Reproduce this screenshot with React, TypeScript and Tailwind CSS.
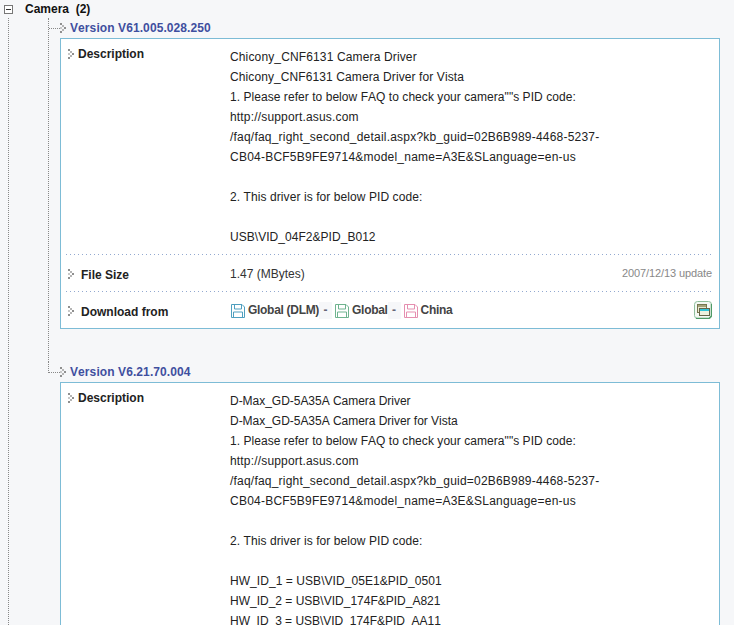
type Line = { text: string; fit?: string };

const commonLines: Line[] = [
  { text: "1. Please refer to below FAQ to check your camera\"\"s PID code:", fit: "tracking-[0.05px]" },
  { text: "http://support.asus.com", fit: "tracking-[0.17px]" },
  { text: "/faq/faq_right_second_detail.aspx?kb_guid=02B6B989-4468-5237-", fit: "tracking-[0.21px]" },
  { text: "CB04-BCF5B9FE9714&model_name=A3E&SLanguage=en-us", fit: "tracking-[0.23px]" },
  { text: "" },
  { text: "2. This driver is for below PID code:", fit: "tracking-[0.08px]" },
  { text: "" },
];

const chicony: Line[] = [
  { text: "Chicony_CNF6131 Camera Driver", fit: "tracking-[0.14px]" },
  { text: "Chicony_CNF6131 Camera Driver for Vista", fit: "tracking-[0.1px]" },
  ...commonLines,
  { text: "USB\\VID_04F2&PID_B012", fit: "tracking-[0.04px]" },
];

const dmax: Line[] = [
  { text: "D-Max_GD-5A35A Camera Driver", fit: "tracking-[-0.03px]" },
  { text: "D-Max_GD-5A35A Camera Driver for Vista", fit: "tracking-[-0.03px]" },
  ...commonLines,
  { text: "HW_ID_1 = USB\\VID_05E1&PID_0501", fit: "tracking-[0.06px]" },
  { text: "HW_ID_2 = USB\\VID_174F&PID_A821" },
  { text: "HW_ID_3 = USB\\VID_174F&PID_AA11", fit: "tracking-[-0.03px]" },
];

function Bullet() {
  return (
    <svg width="6" height="10" viewBox="0 0 6 10" className="shrink-0" fill="#8f8f8f">
      <rect x="0" y="0" width="2" height="2" />
      <rect x="2" y="2" width="2" height="2" fill="#b5b5b5" />
      <rect x="4" y="4" width="2" height="2" />
      <rect x="0" y="4" width="2" height="2" fill="#c8c8c8" />
      <rect x="2" y="6" width="2" height="2" fill="#b5b5b5" />
      <rect x="0" y="8" width="2" height="2" />
    </svg>
  );
}

function Floppy({ color }: { color: string }) {
  return (
    <svg width="14" height="14" viewBox="0 0 14 14" fill="none" stroke={color} className="shrink-0">
      <path d="M.5.5h10.500l2.500 2.500v10.500H.5z" />
      <path d="M3.500.5v4.500h7v-4.500M2.500 13.500v-5.500h9v5.500" />
    </svg>
  );
}

function WindowsButton() {
  return (
    <svg width="18" height="18" viewBox="0 0 18 18" className="shrink-0">
      <rect x=".5" y=".5" width="17" height="17" rx="3" fill="#f4f9f4" stroke="#8fbf9c" />
      <path d="M2 17.500h13l2.500-2.500V3" fill="none" stroke="#4f9a66" strokeWidth="1.500" />
      <rect x="3.500" y="3.500" width="9" height="8" fill="#e6e8d0" stroke="#77774f" />
      <rect x="4" y="4" width="8" height="2" fill="#a3a37a" />
      <rect x="5.500" y="7.500" width="10" height="7" fill="#eef0dd" stroke="#66664a" />
      <rect x="6" y="8" width="9" height="2" fill="#2fc4d8" />
    </svg>
  );
}

function Separator() {
  return <div className="mx-[5px] h-px bg-[repeating-linear-gradient(90deg,#93a9d0_0_1px,transparent_1px_4px)]" />;
}

function Dash() {
  return (
    <span className="flex items-center justify-center w-[13px] h-[17px] mr-[3px] mb-[2px] bg-[#f6f7f9] font-bold text-[#667]">-</span>
  );
}

function Row({ label, children }: { label: string; children: React.ReactNode }) {
  return (
    <div className="flex items-center h-[36px] pt-[2px] pl-[7px] pr-[7px]">
      <Bullet />
      <span className="ml-[4px] w-[152px] pl-[3px] pt-[2px] font-bold text-[#222]">{label}</span>
      {children}
    </div>
  );
}

function VersionBlock({ version, lines, compact }: { version: string; lines: Line[]; compact?: boolean }) {
  return (
    <div className={compact ? "" : "pb-[33px]"}>
      <div className="relative flex items-center h-[20px]">
        <div className="absolute left-[-11px] top-[10px] w-[11px] border-t border-dotted border-[#888]" />
        <Bullet />
        <span className="ml-[4px] font-bold text-[#3f4f9f] tracking-[0.09px]">{version}</span>
      </div>
      <div className="bg-white border border-[#7dbcd6] w-[660px]">
        <div className="flex pl-[7px] pt-[8px] pb-[7px]">
          <div className="flex items-start h-[16px]">
            <div className="pt-[2px]">
              <Bullet />
            </div>
            <span className="ml-[4px] w-[152px] font-bold text-[#222] leading-[14px]">Description</span>
          </div>
          <div className="leading-[20px] text-[#222]">
            {lines.map((line, i) => (
              <div key={i} className={`h-[20px] whitespace-pre ${line.fit ?? ""}`}>
                {line.text}
              </div>
            ))}
          </div>
        </div>
        <Separator />
        <Row label="File Size">
          <span className="text-[#333]">1.47 (MBytes)</span>
          <span className="ml-auto mb-[2px] text-[11px] text-[#888] tracking-[-0.1px]">2007/12/13 update</span>
        </Row>
        <Separator />
        <Row label="Download from">
          <div className="ml-[1px]">
            <Floppy color="#4f9fbf" />
          </div>
          <span className="ml-[3px] mb-[2px] font-bold text-[#444] tracking-[-0.3px]">Global (DLM)</span>
          <Dash />
          <Floppy color="#6fb38f" />
          <span className="ml-[3px] mb-[2px] font-bold text-[#444] tracking-[-0.3px]">Global</span>
          <Dash />
          <Floppy color="#e58fb0" />
          <span className="ml-[3px] mb-[2px] font-bold text-[#444] tracking-[-0.3px]">China</span>
          <div className="ml-auto mb-[2px] flex">
            <WindowsButton />
          </div>
        </Row>
      </div>
    </div>
  );
}

export default function App() {
  return (
    <div className="w-[734px] h-[625px] overflow-hidden bg-[#f6f7f9] font-['Liberation_Sans',Arial,sans-serif] text-[12px] [font-kerning:none]">
      <div className="flex items-center h-[18px] pl-[4px]">
        <div className="relative w-[9px] h-[9px] border border-[#777] bg-white">
          <div className="absolute left-[1px] right-[1px] top-[3px] h-px bg-[#333]" />
        </div>
        <span className="ml-[12px] font-bold text-[#111] whitespace-pre">Camera  (2)</span>
      </div>
      <div className="ml-[8px] border-l border-dotted border-[#888] pl-[39px]">
        <div className="border-l border-dotted border-[#888] pl-[11px]">
          <VersionBlock version="Version V61.005.028.250" lines={chicony} />
        </div>
        <div className="relative pl-[12px]">
          <div className="absolute left-0 top-0 h-[11px] border-l border-dotted border-[#888]" />
          <VersionBlock version="Version V6.21.70.004" lines={dmax} compact />
        </div>
      </div>
    </div>
  );
}
